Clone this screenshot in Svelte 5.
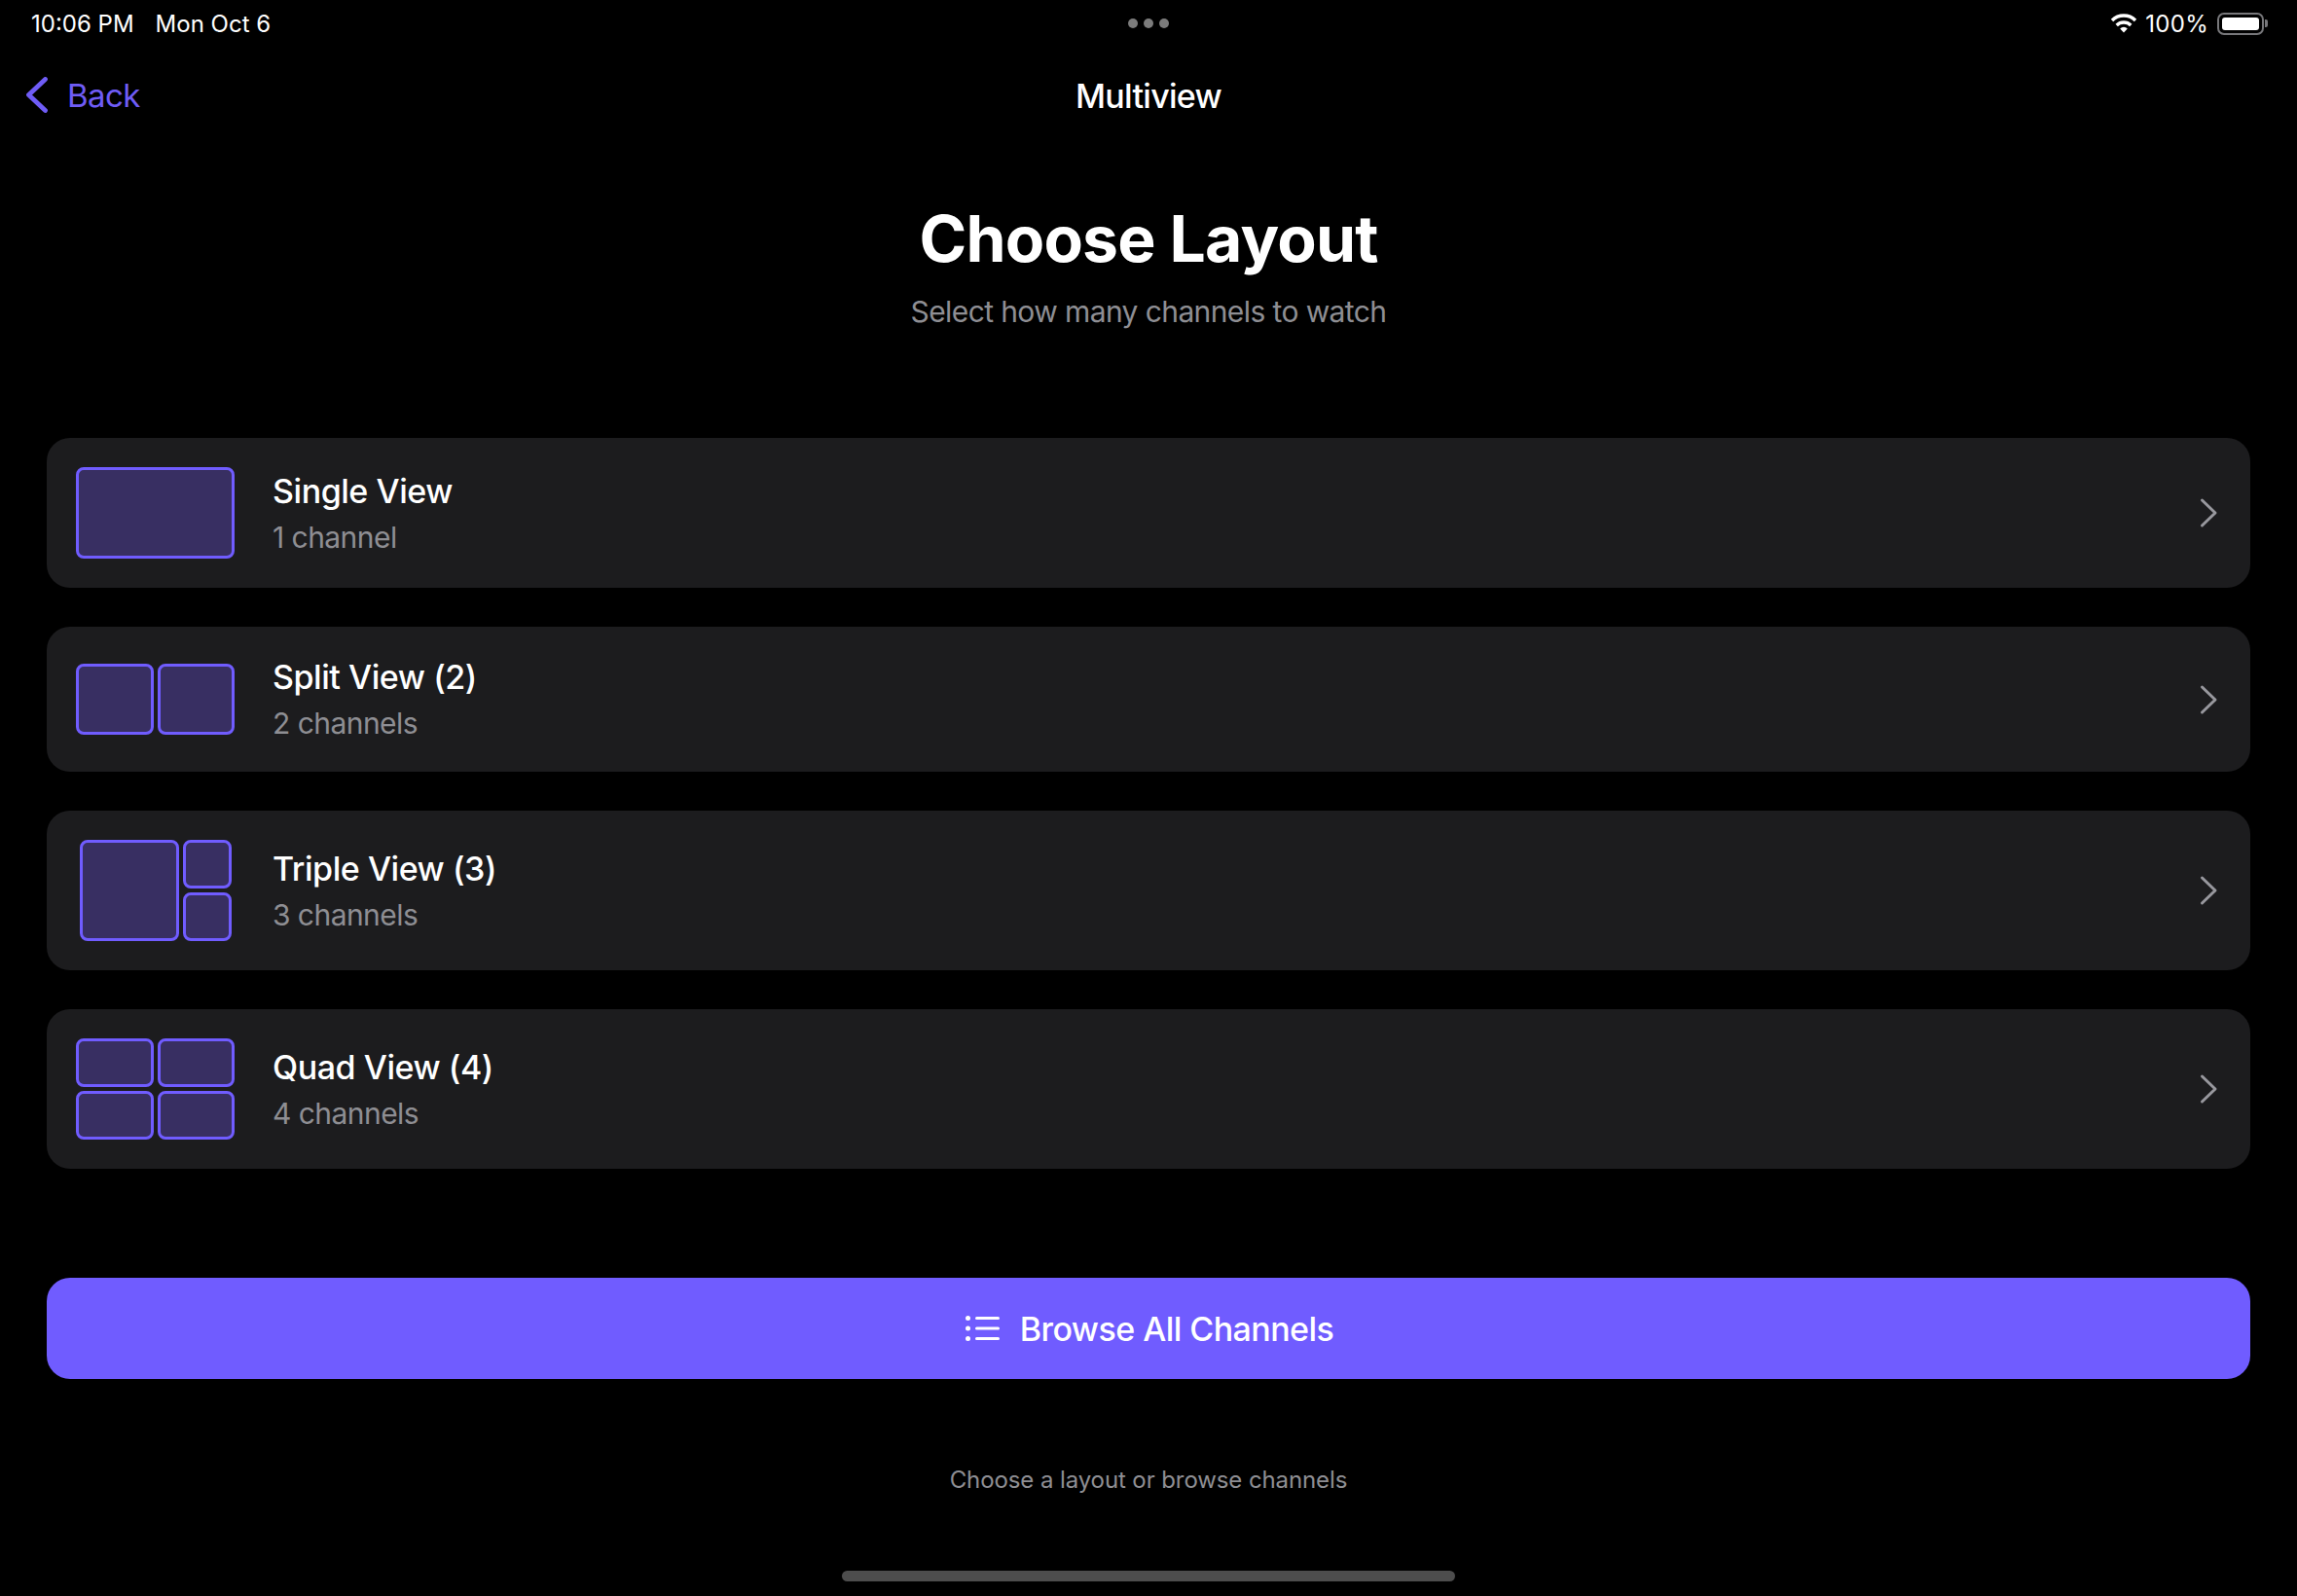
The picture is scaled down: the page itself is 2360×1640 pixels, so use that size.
<script>
  const layouts = [
    { id: 'single', name: 'Single View', sub: '1 channel', panes: 1 },
    { id: 'split', name: 'Split View (2)', sub: '2 channels', panes: 2 },
    { id: 'triple', name: 'Triple View (3)', sub: '3 channels', panes: 3 },
    { id: 'quad', name: 'Quad View (4)', sub: '4 channels', panes: 4 }
  ];
</script>

<div class="screen">
  <div class="status">
    <div class="status-left">
      <span>10:06 PM</span>
      <span>Mon Oct 6</span>
    </div>
    <div class="dots"><i></i><i></i><i></i></div>
    <div class="status-right">
      <svg class="wifi" width="28" height="20" viewBox="0 0 28 20" fill="none">
        <path d="M2 7A17 17 0 0 1 26 7" stroke="#fff" stroke-width="3.400"/>
        <path d="M6.700 12A10.500 10.500 0 0 1 21.300 12" stroke="#fff" stroke-width="3.400"/>
        <path d="M14 19.500 10.200 15.400A5.400 5.400 0 0 1 17.800 15.400Z" fill="#fff"/>
      </svg>
      <span class="pct">100%</span>
      <div class="battery"><div class="battery-fill"></div></div>
      <div class="battery-cap"></div>
    </div>
  </div>

  <div class="nav">
    <button class="back">
      <svg width="24" height="38" viewBox="0 0 24 38" fill="none">
        <path d="M20.500 2.500 3.500 18.500 20.500 34.500" stroke="#6f5cf6" stroke-width="4.800" stroke-linecap="round" stroke-linejoin="round"/>
      </svg>
      <span>Back</span>
    </button>
    <div class="nav-title">Multiview</div>
  </div>

  <div class="heading">
    <h1>Choose Layout</h1>
    <p>Select how many channels to watch</p>
  </div>

  <div class="list">
    {#each layouts as layout}
      <div class="card">
        <div class="preview {layout.id}">
          {#each Array(layout.panes) as _}
            <div class="pane"></div>
          {/each}
        </div>
        <div class="labels">
          <div class="name">{layout.name}</div>
          <div class="sub">{layout.sub}</div>
        </div>
        <svg class="chevron" width="20" height="32" viewBox="0 0 20 32" fill="none">
          <path d="M3.500 3 17 16 3.500 29" stroke="#98989e" stroke-width="3" stroke-linecap="round" stroke-linejoin="round"/>
        </svg>
      </div>
    {/each}
  </div>

  <button class="browse">
    <svg width="36" height="26" viewBox="0 0 36 26" fill="#fff">
      <circle cx="2.500" cy="2.500" r="2.500"/>
      <circle cx="2.500" cy="13" r="2.500"/>
      <circle cx="2.500" cy="23.500" r="2.500"/>
      <rect x="10" y="1" width="25" height="3" rx="1.500"/>
      <rect x="10" y="11.500" width="25" height="3" rx="1.500"/>
      <rect x="10" y="22" width="25" height="3" rx="1.500"/>
    </svg>
    <span>Browse All Channels</span>
  </button>

  <div class="hint">Choose a layout or browse channels</div>

  <div class="home"></div>
</div>

<style>
  :global(body) {
    margin: 0;
    background: #000;
  }

  .screen {
    width: 2360px;
    height: 1640px;
    background: #000;
    color: #fff;
    font-family: Inter, "Noto Sans", sans-serif;
    display: flex;
    flex-direction: column;
    overflow: hidden;
  }

  .status {
    height: 48px;
    display: grid;
    grid-template-columns: 1fr auto 1fr;
    align-items: center;
    padding: 0 30px;
    font-size: 24px;
    box-sizing: border-box;
  }

  .status-left {
    display: flex;
    gap: 22px;
    margin-left: 2px;
  }

  .dots {
    display: flex;
    gap: 6px;
  }

  .dots i {
    width: 10px;
    height: 10px;
    border-radius: 50%;
    background: #7c7c7c;
  }

  .status-right {
    display: flex;
    align-items: center;
    justify-content: flex-end;
  }

  .wifi {
    margin-right: 8px;
  }

  .pct {
    letter-spacing: 0.3px;
  }

  .battery {
    width: 48px;
    height: 23px;
    margin-left: 9px;
    padding: 3px;
    box-sizing: border-box;
    border: 2px solid #77777a;
    border-radius: 7px;
  }

  .battery-fill {
    height: 100%;
    background: #fff;
    border-radius: 3px;
  }

  .battery-cap {
    width: 3px;
    height: 8px;
    margin-left: 1px;
    background: #77777a;
    border-radius: 0 2px 2px 0;
  }

  .nav {
    height: 100px;
    position: relative;
    display: flex;
    align-items: center;
    justify-content: center;
  }

  .back {
    position: absolute;
    left: 26px;
    top: 30px;
    display: flex;
    align-items: center;
    gap: 19px;
    padding: 0;
    border: none;
    background: none;
    color: #6f5cf6;
    font: inherit;
    font-size: 33px;
    letter-spacing: -0.6px;
  }

  .nav-title {
    font-size: 34px;
    font-weight: 500;
    letter-spacing: -0.7px;
    margin-top: 1px;
  }

  .heading {
    text-align: center;
    margin-top: 56px;
  }

  h1 {
    margin: 0;
    font-size: 66px;
    line-height: 82px;
    font-weight: 700;
    letter-spacing: -0.8px;
  }

  p {
    margin: 16px 0 0;
    font-size: 30px;
    line-height: 36px;
    letter-spacing: -0.6px;
    color: #8e8e93;
  }

  .list {
    margin: 112px 48px 0;
    display: flex;
    flex-direction: column;
    gap: 40px;
  }

  .card {
    display: flex;
    align-items: center;
    padding: 30px;
    background: #1c1c1e;
    border-radius: 24px;
  }

  .preview {
    width: 163px;
    display: grid;
    gap: 4px;
    flex: none;
    margin-right: 39px;
    box-sizing: border-box;
  }

  .pane {
    background: #382f62;
    border: 3px solid #705cff;
    border-radius: 8px;
    box-sizing: border-box;
  }

  .single {
    height: 94px;
  }

  .split {
    height: 73px;
    grid-template-columns: 1fr 1fr;
  }

  .triple {
    height: 104px;
    padding: 0 3px 0 4px;
    grid-template-columns: 102px 1fr;
    grid-template-rows: 1fr 1fr;
  }

  .triple .pane:first-child {
    grid-row: span 2;
  }

  .quad {
    height: 104px;
    grid-template-columns: 1fr 1fr;
    grid-template-rows: 1fr 1fr;
  }

  .labels {
    flex: 1;
  }

  .name {
    font-size: 34px;
    line-height: 44px;
    font-weight: 500;
    letter-spacing: -0.45px;
  }

  .sub {
    margin-top: 5px;
    font-size: 30px;
    line-height: 40px;
    letter-spacing: -0.55px;
    color: #8e8e93;
  }

  .chevron {
    flex: none;
    margin-right: 3px;
  }

  .browse {
    margin: 112px 48px 0;
    height: 104px;
    display: flex;
    align-items: center;
    justify-content: center;
    gap: 20px;
    padding: 0 0 0 2px;
    border: none;
    border-radius: 24px;
    background: #705cff;
    color: #fff;
    font: inherit;
    font-size: 34px;
    font-weight: 500;
    letter-spacing: -0.55px;
  }

  .hint {
    margin-top: 89px;
    text-align: center;
    font-size: 24px;
    line-height: 30px;
    letter-spacing: -0.1px;
    color: #8e8e93;
  }

  .home {
    width: 630px;
    height: 11px;
    margin: auto auto 15px;
    border-radius: 6px;
    background: #4d4d4d;
  }
</style>
